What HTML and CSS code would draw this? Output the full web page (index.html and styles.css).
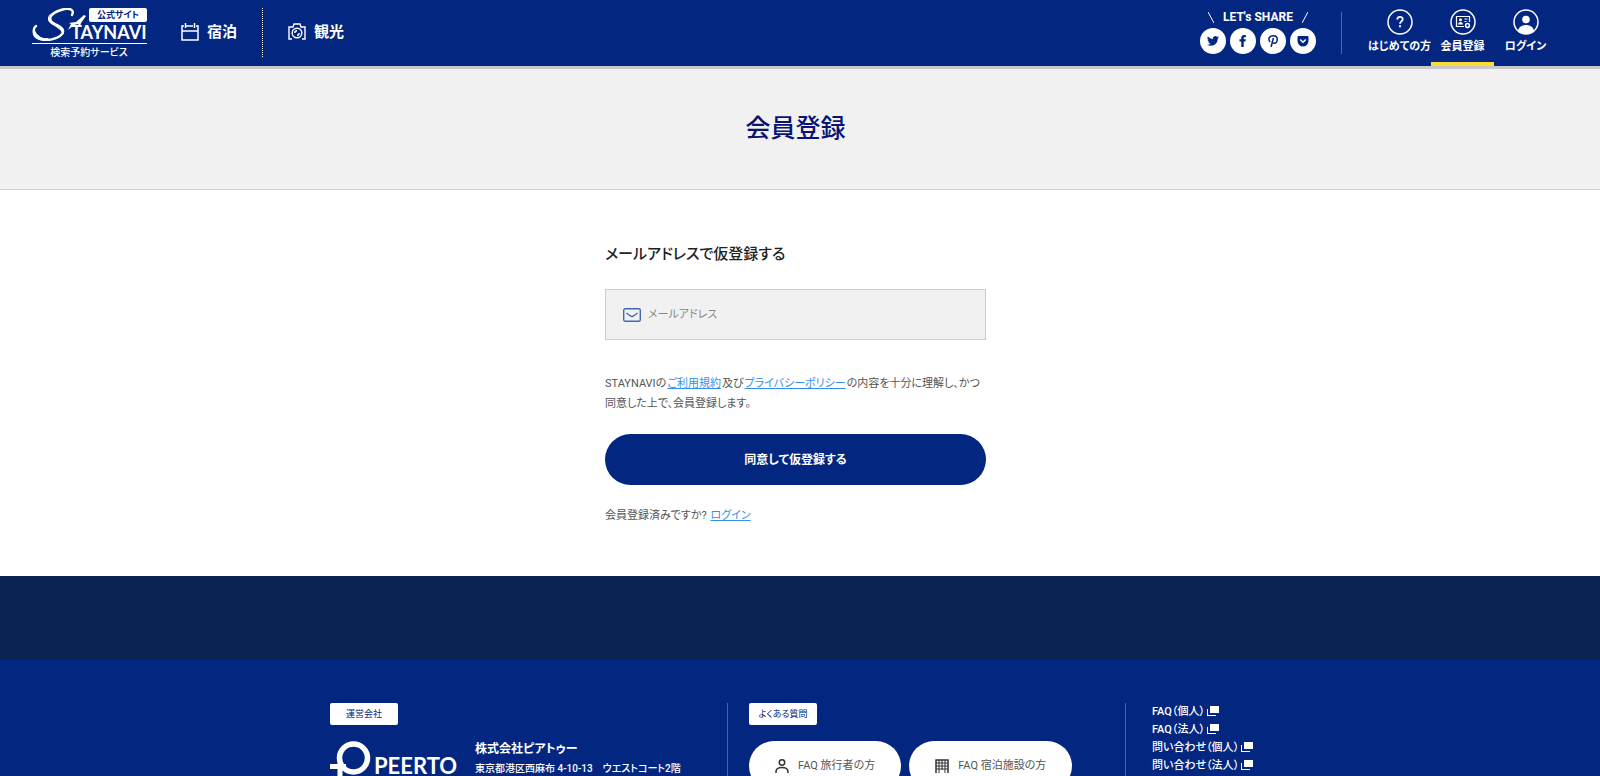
FILE: index.html
```html
<!DOCTYPE html>
<html lang="ja">

<head>
    <meta charset="UTF-8">
    <meta name="viewport" content="width=device-width, initial-scale=1.0">
    <title>会員登録 | STAYNAVI</title>
    <link rel="stylesheet" href="styles.css">
</head>

<body>
    <header class="header">
        <a class="logo" href="#">
            <svg width="115" height="50" viewBox="0 0 115 50">
                <!-- script S -->
                <path d="M40 7C43 1 37-.5 29 2C19 5 15 11 21 15C26 19 34 21 30 26C26 31 14 34 8 30C2 27 0 21 4 18" fill="none" stroke="#fff" stroke-width="2.400" stroke-linecap="round" />
                <path d="M1 21C2 27 8 31 17 30L14 33C5 33-1 29 1 21z" fill="#fff" />
                <path d="M22 4C15 8 16 12 21 14C28 17 35 20 31 27C29 20 23 19 18 15C14 11 16 6 22 4z" fill="#fff" />
                <path d="M37 15l7-1 8-7 2 1-5 7-1 4-2-3-4 1-6 5 3-6z" fill="#fff" />
                <rect x="57" width="58" height="14" rx="2" fill="#fff" />
                <text class="logo-badge" x="86" y="10" text-anchor="middle">公式サイト</text>
                <text class="logo-name" x="39" y="31">TAYNAVI</text>
                <path d="M0 35.500h115" stroke="#fff" />
                <text class="logo-sub" x="57" y="48" text-anchor="middle">検索予約サービス</text>
            </svg>
        </a>
        <nav class="main-nav">
            <a class="nav-link" href="#">
                <svg width="18" height="18" viewBox="0 0 18 18" fill="none" stroke="#fff" stroke-width="1.500">
                    <path d="M3 3H1v14h16V3h-2M7 3h5M1 8h16M4.500 0v5M7 3h-2.500M13.500 0v5" />
                </svg>
                宿泊
            </a>
            <a class="nav-link" href="#">
                <svg width="18" height="18" viewBox="0 0 18 18" fill="none" stroke="#fff" stroke-width="1.400">
                    <path d="M4 16H1V4h4l1-3h6l1 3h4v12h-3" />
                    <circle cx="9" cy="10" r="4.800" />
                    <path d="M6.800 10a2.200 2.200 0 0 1 2.200-2.200M11.200 10a2.200 2.200 0 0 1-2.200 2.200" />
                </svg>
                観光
            </a>
        </nav>
        <div class="share">
            <p class="share-title">
                <svg width="6" height="11" viewBox="0 0 6 11"><path d="M0 0l6 11" stroke="#fff" /></svg>
                LET's SHARE
                <svg width="6" height="11" viewBox="0 0 6 11"><path d="M6 0L0 11" stroke="#fff" /></svg>
            </p>
            <div class="share-list">
                <a class="share-link" href="#" aria-label="Twitter">
                    <svg width="12" height="12" viewBox="0 0 24 24"><path d="M24 4.600a10 10 0 0 1-2.800.8 5 5 0 0 0 2.100-2.700 10 10 0 0 1-3.100 1.200 4.900 4.900 0 0 0-8.400 4.500A14 14 0 0 1 1.700 3.200a4.900 4.900 0 0 0 1.500 6.500 5 5 0 0 1-2.200-.6v.1a4.900 4.900 0 0 0 3.900 4.800 5 5 0 0 1-2.200.1 4.900 4.900 0 0 0 4.600 3.400A9.900 9.900 0 0 1 0 19.500 14 14 0 0 0 7.500 21.700c9.100 0 14.300-7.700 14-14.600A10 10 0 0 0 24 4.600z" /></svg>
                </a>
                <a class="share-link" href="#" aria-label="Facebook">
                    <svg width="12" height="12" viewBox="0 0 24 24"><path d="M8.500 24V13H5V8.700h3.500V5.600C8.500 2 11.200 0 14.400 0c1.600 0 2.900.1 3.300.2V4.500h-2.300C13.700 4.500 13.400 5 13.400 6v2.700h4.200L17 13h-3.600v11z" /></svg>
                </a>
                <a class="share-link" href="#" aria-label="Pinterest">
                    <svg width="12" height="12" viewBox="0 0 24 24" fill="none" stroke-width="3" stroke-linecap="round"><path d="M5.500 13C1 7 6 1.500 12.500 1.500c5 0 8 3 8 7 0 5-3 8-6.500 8-2 0-3-1-3.500-2M12.500 7L8.500 22.500" /></svg>
                </a>
                <a class="share-link" href="#" aria-label="Pocket">
                    <svg width="12" height="12" viewBox="0 0 24 24"><path d="M3 2h18a2 2 0 0 1 2 2v8a11 11 0 0 1-22 0V4a2 2 0 0 1 2-2z" /><path class="pocket-mark" d="M6.500 9l5.500 5.500L17.500 9" /></svg>
                </a>
            </div>
        </div>
        <nav class="user-nav">
            <a class="user-link" href="#">
                <svg width="26" height="26" viewBox="0 0 26 26" fill="none" stroke="#fff" stroke-width="1.500">
                    <circle cx="13" cy="13" r="12" />
                    <path d="M10.300 10.500C10.300 7 15.700 7 15.700 10.200C15.700 12.200 13 12.500 13 14.800" stroke-width="1.800" />
                    <path d="M13 16.200v2" stroke-width="2" />
                </svg>
                はじめての方
            </a>
            <a class="user-link active" href="#">
                <svg width="26" height="26" viewBox="0 0 26 26" fill="none" stroke="#fff" stroke-width="1.500">
                    <circle cx="13" cy="13" r="12" />
                    <path d="M14 17.500H6.500v-10h13v5.500M14.500 10h3M14.500 12.500h2" stroke-width="1.200" />
                    <circle cx="10.500" cy="10.800" r="1.500" fill="#fff" stroke="none" />
                    <path d="M8 15.500c0-3.500 5-3.500 5 0z" fill="#fff" stroke="none" />
                    <circle cx="17.500" cy="16.500" r="1.900" />
                </svg>
                会員登録
            </a>
            <a class="user-link" href="#">
                <svg width="26" height="26" viewBox="0 0 26 26">
                    <circle cx="13" cy="13" r="12" fill="none" stroke="#fff" stroke-width="1.500" />
                    <circle cx="13" cy="10.500" r="3.800" fill="#fff" />
                    <path d="M5 22c1-8 15-8 16 0a12 12 0 0 1-16 0z" fill="#fff" />
                </svg>
                ログイン
            </a>
        </nav>
    </header>

    <div class="title-area">
        <h1 class="title">会員登録</h1>
    </div>

    <main class="main">
        <form class="register">
            <h2 class="register-title"><label for="email">メールアドレスで仮登録する</label></h2>
            <div class="field">
                <svg width="18" height="14" viewBox="0 0 18 14" fill="none" stroke="#4466b4" stroke-width="1.400">
                    <rect x="0.700" y="0.700" width="16.600" height="12.600" rx="1.500" />
                    <path d="M3.500 5C7 8 8 8.500 9 8.500S11 8 14.500 5" />
                </svg>
                <input class="field-input" type="email" id="email" name="email" placeholder="メールアドレス">
            </div>
            <p class="note">STAYNAVIの<a href="#">ご利用規約</a>及び<a href="#">プライバシーポリシー</a>の内容を十分に理解し、かつ同意した上で、会員登録します。</p>
            <button class="submit" type="submit">同意して仮登録する</button>
            <p class="note">会員登録済みですか? <a href="#">ログイン</a></p>
        </form>
    </main>

    <div class="band"></div>

    <footer class="footer">
        <div class="footer-inner">
            <section class="company">
                <h3 class="tag">運営会社</h3>
                <div class="company-body">
                    <svg width="128" height="44" viewBox="0 0 128 44">
                        <circle cx="23.500" cy="17" r="14" fill="none" stroke="#fff" stroke-width="5.500" />
                        <path d="M0 25.500h16M10 22v20" stroke="#fff" stroke-width="5" />
                        <text class="peerto" x="44" y="33">PEERTO</text>
                    </svg>
                    <div>
                        <p class="company-name">株式会社ピアトゥー</p>
                        <p class="company-address">東京都港区西麻布 4-10-13　ウエストコート2階</p>
                    </div>
                </div>
            </section>
            <section class="faq">
                <h3 class="tag">よくある質問</h3>
                <div class="faq-list">
                    <a class="faq-link" href="#">
                        <svg width="14" height="14" viewBox="0 0 14 14" fill="none" stroke="#333" stroke-width="1.500">
                            <circle cx="7" cy="3.500" r="2.700" />
                            <path d="M1 14v-1.500C1 7 13 7 13 12.500V14" />
                        </svg>
                        FAQ 旅行者の方
                    </a>
                    <a class="faq-link" href="#">
                        <svg width="14" height="14" viewBox="0 0 14 14" fill="none" stroke="#333">
                            <path d="M1 14V1h12v13" stroke-width="1.500" />
                            <path d="M4 1v13M7 1v10M10 1v13M1 4h12M1 7h12M1 10h12" />
                        </svg>
                        FAQ 宿泊施設の方
                    </a>
                </div>
            </section>
            <ul class="links">
                <li><a href="#">FAQ（個人）<i class="blank"></i></a></li>
                <li><a href="#">FAQ（法人）<i class="blank"></i></a></li>
                <li><a href="#">問い合わせ（個人）<i class="blank"></i></a></li>
                <li><a href="#">問い合わせ（法人）<i class="blank"></i></a></li>
            </ul>
        </div>
    </footer>
</body>

</html>
```

FILE: styles.css
```css
* {
    margin: 0;
    padding: 0;
    box-sizing: border-box;
}

body {
    height: 100vh;
    overflow-y: hidden;
    background: #fff;
    color: #555;
    font-family: Roboto, "Noto Sans CJK JP", sans-serif;
    font-feature-settings: "palt";
    font-size: 11px;
    line-height: 20px;
}

a {
    color: inherit;
    text-decoration: none;
}

svg {
    display: block;
    flex-shrink: 0;
}

/* header */
.header {
    display: flex;
    height: 69px;
    padding: 0 43px 0 32px;
    background: #032780;
    border-bottom: 3px solid #c8c8cc;
    color: #fff;
    font-weight: 700;
}

.logo {
    padding-top: 8px;
}

.logo-badge {
    fill: #032780;
    font-size: 9px;
}

.logo-name {
    fill: #fff;
    font-family: Lato, sans-serif;
    font-size: 18px;
}

.logo-sub {
    fill: #fff;
    font-size: 10px;
    font-weight: 500;
}

.main-nav {
    display: flex;
    align-items: center;
    margin: 0 auto 0 34px;
    padding-bottom: 2px;
}

.nav-link {
    display: flex;
    align-items: center;
    gap: 8px;
    height: 49px;
    font-size: 15px;
}

.nav-link:first-child {
    margin-right: 25px;
    padding-right: 25px;
    border-right: 1px dotted #fff;
}

.share {
    margin: 12px 0;
    padding-right: 25px;
    border-right: 1px solid #5068a8;
}

.share-title {
    display: flex;
    justify-content: center;
    gap: 9px;
    height: 16px;
    font-size: 12px;
    line-height: 10px;
}

.share-list {
    display: flex;
    gap: 4px;
}

.share-link {
    display: flex;
    align-items: center;
    justify-content: center;
    width: 26px;
    height: 26px;
    border-radius: 50%;
    background: #fff;
    fill: #032780;
    stroke: none;
}

.share-link [stroke-linecap] {
    stroke: #032780;
}

.pocket-mark {
    fill: none;
    stroke: #fff;
    stroke-width: 3;
}

.user-nav {
    display: flex;
    margin-left: 26px;
}

.user-link {
    display: flex;
    flex-direction: column;
    align-items: center;
    width: 63px;
    padding-top: 9px;
    border-bottom: 4px solid transparent;
    line-height: 24px;
    white-space: nowrap;
}

.user-link.active {
    border-color: #fcdc32;
}

/* title */
.title-area {
    padding: 40px 9px 40px 0;
    background: #f1f1f1;
    border-bottom: 1px solid #d0d0d0;
    text-align: center;
}

.title {
    color: #0a1374;
    font-size: 25px;
    font-weight: 500;
    line-height: 40px;
}

/* form */
.main {
    padding: 54px 9px 50px 0;
}

.register {
    width: 381px;
    margin: 0 auto;
}

.register-title {
    margin-bottom: 25px;
    color: #222;
    font-size: 15px;
    font-weight: 500;
}

.field {
    display: flex;
    align-items: center;
    gap: 7px;
    height: 51px;
    margin-bottom: 34px;
    padding: 0 17px;
    background: #f1f1f1;
    border: 1px solid #ccc;
}

.field-input {
    flex: 1;
    background: none;
    border: none;
    outline: none;
    font: inherit;
    font-feature-settings: inherit;
}

.field-input::placeholder {
    color: #888;
}

.note a {
    margin: 0 1px;
    color: #3490ea;
    text-decoration: underline;
}

.submit {
    display: block;
    width: 100%;
    height: 51px;
    margin: 20px 0 21px;
    background: #032780;
    border: none;
    border-radius: 26px;
    color: #fff;
    font: inherit;
    font-feature-settings: inherit;
    font-size: 12px;
    font-weight: 700;
}

.band {
    height: 84px;
    background: #0a2352;
}

/* footer */
.footer {
    padding: 43px 9px 43px 0;
    background: #032780;
    color: #fff;
    font-weight: 500;
}

.footer-inner {
    display: grid;
    grid-template-columns: 398px 398px 1fr;
    max-width: 931px;
    min-height: 120px;
    margin: 0 auto;
}

.company,
.faq {
    border-right: 1px solid #4a63a6;
}

.faq {
    padding-left: 21px;
}

.tag {
    width: fit-content;
    min-width: 68px;
    padding: 0 8px;
    background: #fff;
    border-radius: 2px;
    color: #032780;
    font-size: 9px;
    font-weight: 400;
    line-height: 22px;
    text-align: center;
}

.company-body {
    display: flex;
    gap: 17px;
    margin-top: 16px;
}

.peerto {
    fill: #fff;
    font-family: Lato, sans-serif;
    font-size: 22px;
    font-weight: 700;
}

.company-name {
    font-size: 12px;
    font-weight: 700;
    line-height: 16px;
}

.company-address {
    font-size: 10px;
    line-height: 24px;
}

.faq-list {
    display: flex;
    gap: 8px;
    margin-top: 16px;
}

.faq-link {
    display: flex;
    align-items: center;
    gap: 9px;
    height: 50px;
    padding: 0 26px;
    background: #fff;
    border-radius: 25px;
    color: #555;
    font-weight: 400;
    white-space: nowrap;
}

.links {
    padding-left: 26px;
    list-style: none;
    line-height: 18px;
}

.blank {
    display: inline-block;
    width: 9px;
    height: 7px;
    margin-left: 5px;
    background: #fff;
    box-shadow: -2px 2px 0 #032780, -3px 3px 0 #fff;
    vertical-align: 2px;
}
```
